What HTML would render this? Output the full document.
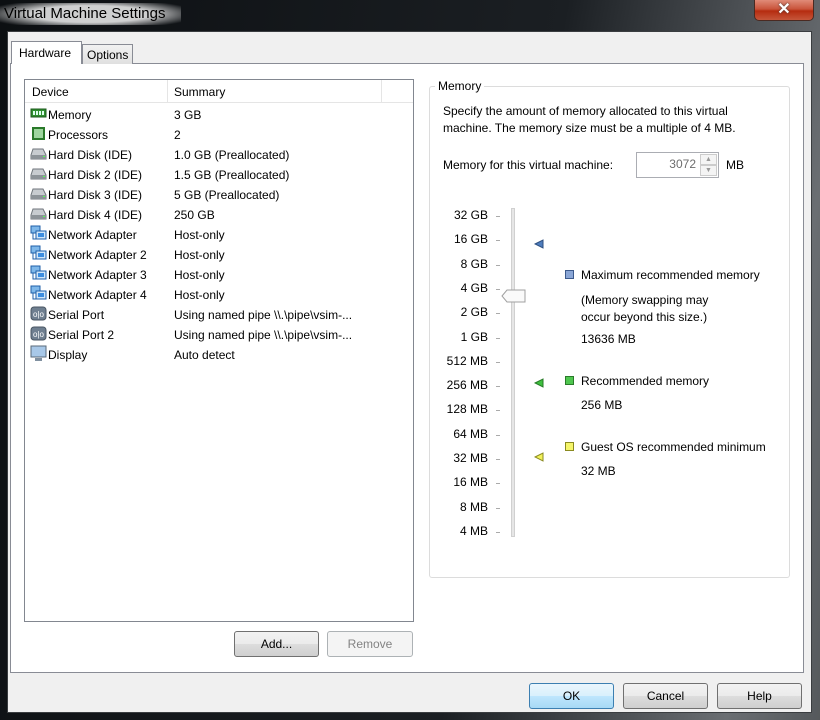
<!DOCTYPE html>
<html><head><style>
*{margin:0;padding:0;box-sizing:border-box}
body{width:820px;height:720px;overflow:hidden;background:#1a1d20;font-family:"Liberation Sans",sans-serif;font-size:12px;color:#000;position:relative}
.a{position:absolute}
.title{left:0;top:3px;font-size:15px;line-height:22px;color:#000;padding:0 16px 0 4px;background:radial-gradient(ellipse 60% 70% at 50% 50%,rgba(255,255,255,.8) 55%,rgba(255,255,255,0) 100%)}
.frame{left:0;top:0;width:820px;height:720px;background:linear-gradient(100deg,#0c0f12 0%,#1b1f23 60%,#6a6e72 90%,#55595c 100%)}
.client{left:7px;top:31px;width:805px;height:682px;background:#f0f0f0;border:1px solid #3a3d40}
.panel{left:10px;top:63px;width:794px;height:610px;background:#fff;border:1px solid #898c95}
.tab{border:1px solid #898c95;border-bottom:none;background:linear-gradient(#f2f2f2,#e0e0e0)}
.list{left:24px;top:79px;width:390px;height:543px;border:1px solid #828790;background:#fff}
.row{position:absolute;left:0;height:20px;line-height:20px;white-space:nowrap}
.btn{position:absolute;height:26px;border:1px solid #707070;border-radius:3px;background:linear-gradient(#f2f2f2 0%,#ebebeb 50%,#dddddd 51%,#cfcfcf 100%);text-align:center;line-height:24px}
.lbl{position:absolute;width:60px;text-align:right;left:428px}
.tick{position:absolute;left:496px;width:4px;height:1px;background:#aaa}
</style></head><body>
<div class="a frame"></div>
<div class="a title">Virtual Machine Settings</div>
<div class="a" style="left:754px;top:0;width:60px;height:21px;border:1px solid #4a2a22;border-top:none;border-radius:0 0 5px 5px;background:linear-gradient(#e08b78 0%,#c9543b 45%,#b52c10 55%,#c6563a 100%);color:#fff;text-align:center;font-weight:bold;font-size:16px;line-height:19px;text-shadow:0 0 2px #333">✕</div>
<div class="a client"></div>
<div class="a panel"></div>
<div class="a tab" style="left:11px;top:41px;width:71px;height:23px;background:#fff;line-height:22px;padding-left:7px">Hardware</div>
<div class="a tab" style="left:82px;top:44px;width:51px;height:20px;line-height:20px;padding-left:4px">Options</div>
<div class="a list">
 <div class="a" style="left:0;top:0;width:388px;height:23px;border-bottom:1px solid #e5e5e5;background:#fff"></div>
 <div class="a" style="left:142px;top:0;width:1px;height:23px;background:#e5e5e5"></div>
 <div class="a" style="left:356px;top:0;width:1px;height:23px;background:#e5e5e5"></div>
 <div class="a" style="left:7px;top:5px">Device</div>
 <div class="a" style="left:149px;top:5px">Summary</div>
 <div id="rows"></div>
</div>
<div class="btn" style="left:234px;top:631px;width:85px">Add...</div>
<div class="btn" style="left:327px;top:631px;width:86px;border-color:#adb2b5;background:#f4f4f4;color:#838383">Remove</div>

<div class="a" style="left:429px;top:86px;width:361px;height:492px;border:1px solid #dcdcdc;border-radius:3px"></div>
<div class="a" style="left:435px;top:79px;background:#fff;padding:0 3px">Memory</div>
<div class="a" style="left:443px;top:103px;line-height:17px">Specify the amount of memory allocated to this virtual<br>machine. The memory size must be a multiple of 4 MB.</div>
<div class="a" style="left:443px;top:158px">Memory for this virtual machine:</div>
<div class="a" style="left:636px;top:152px;width:83px;height:26px;border:1px solid #abadb3;background:#fff;color:#6d6d6d;text-align:right;padding-right:22px;line-height:22px">3072</div>
<div class="a" style="left:700px;top:154px;width:17px;height:11px;border:1px solid #ccc;background:#f4f4f4;font-size:7px;text-align:center;color:#999;line-height:10px">▲</div>
<div class="a" style="left:700px;top:165px;width:17px;height:11px;border:1px solid #ccc;background:#f4f4f4;font-size:7px;text-align:center;color:#999;line-height:10px">▼</div>
<div class="a" style="left:726px;top:158px">MB</div>

<div class="a" style="left:511px;top:208px;width:4px;height:329px;background:#e6e6e6;border:1px solid #d0d0d0"></div>
<div id="scale"></div>
<svg class="a" style="left:501px;top:289px" width="25" height="14"><path d="M1 7 L6 1 H24 V13 H6 Z" fill="#fafafa" stroke="#a0a0a0"/></svg>
<svg class="a" style="left:534px;top:239px" width="10" height="10"><path d="M1 5 L9 1 V9 Z" fill="#4f7dbd" stroke="#2d4f80"/></svg>
<svg class="a" style="left:534px;top:378px" width="10" height="10"><path d="M1 5 L9 1 V9 Z" fill="#3fbf3f" stroke="#267a26"/></svg>
<svg class="a" style="left:534px;top:452px" width="10" height="10"><path d="M1 5 L9 1 V9 Z" fill="#f2f25a" stroke="#8a8a20"/></svg>
<div class="a" style="left:565px;top:270px;width:9px;height:9px;background:#8aa6d6;border:1px solid #3c5a8c"></div>
<div class="a" style="left:581px;top:268px">Maximum recommended memory</div>
<div class="a" style="left:581px;top:292px;line-height:17px">(Memory swapping may<br>occur beyond this size.)</div>
<div class="a" style="left:581px;top:332px">13636 MB</div>
<div class="a" style="left:565px;top:376px;width:9px;height:9px;background:#4fc64f;border:1px solid #2a7a2a"></div>
<div class="a" style="left:581px;top:374px">Recommended memory</div>
<div class="a" style="left:581px;top:398px">256 MB</div>
<div class="a" style="left:565px;top:442px;width:9px;height:9px;background:#f5f56a;border:1px solid #8a8a20"></div>
<div class="a" style="left:581px;top:440px">Guest OS recommended minimum</div>
<div class="a" style="left:581px;top:464px">32 MB</div>

<div class="btn" style="left:529px;top:683px;width:85px;border-color:#3c7fb1;background:linear-gradient(#eaf6fd 0%,#d9f0fc 50%,#bee6fd 51%,#a7d9f5 100%)">OK</div>
<div class="btn" style="left:623px;top:683px;width:85px">Cancel</div>
<div class="btn" style="left:717px;top:683px;width:85px">Help</div>

<script>
var rows=[["mem","Memory","3 GB"],["cpu","Processors","2"],["hd","Hard Disk (IDE)","1.0 GB (Preallocated)"],["hd","Hard Disk 2 (IDE)","1.5 GB (Preallocated)"],["hd","Hard Disk 3 (IDE)","5 GB (Preallocated)"],["hd","Hard Disk 4 (IDE)","250 GB"],["net","Network Adapter","Host-only"],["net","Network Adapter 2","Host-only"],["net","Network Adapter 3","Host-only"],["net","Network Adapter 4","Host-only"],["ser","Serial Port","Using named pipe \\\\.\\pipe\\vsim-..."],["ser","Serial Port 2","Using named pipe \\\\.\\pipe\\vsim-..."],["dis","Display","Auto detect"]];
var ic={mem:'<rect x="1" y="4" width="15" height="8" fill="#2f8f2f" stroke="#1c5a1c"/><rect x="3" y="6" width="2" height="4" fill="#dfe"/><rect x="6" y="6" width="2" height="4" fill="#dfe"/><rect x="9" y="6" width="2" height="4" fill="#dfe"/><rect x="12" y="6" width="2" height="4" fill="#dfe"/>',
cpu:'<rect x="3" y="3" width="11" height="11" fill="#9ed69e" stroke="#2a7a2a" stroke-width="2"/>',
hd:'<path d="M3 4 H13 L16 10 V14 H1 V10 Z" fill="#c8ccd0" stroke="#70767c"/><rect x="1" y="10" width="15" height="4" fill="#8d9398"/><rect x="13" y="11" width="2" height="1" fill="#5f5"/>',
net:'<rect x="1" y="1" width="9" height="7" fill="#7fb8ea" stroke="#1f5fa8"/><rect x="6" y="6" width="10" height="8" fill="#cfe6fa" stroke="#1f5fa8"/><rect x="8" y="8" width="6" height="4" fill="#3c8de0"/><path d="M3 8 V14 H6" stroke="#1f5fa8" fill="none"/>',
ser:'<rect x="1" y="2" width="15" height="13" rx="3" fill="#6f7f90" stroke="#4a5663"/><text x="8.5" y="12" font-size="8" text-anchor="middle" fill="#fff" font-family="Liberation Sans">o|o</text>',
dis:'<rect x="1" y="1" width="15" height="11" fill="#a8c8e8" stroke="#5a6a7a"/><rect x="5" y="13" width="7" height="3" fill="#8090a0"/>'};
var h='';rows.forEach(function(r,i){var t=25+i*20;h+='<div class="row" style="top:'+t+'px;left:5px"><svg width="17" height="17" style="vertical-align:-3px">'+ic[r[0]]+'</svg></div><div class="row" style="top:'+t+'px;left:23px">'+r[1]+'</div><div class="row" style="top:'+t+'px;left:149px">'+r[2]+'</div>';});
document.getElementById('rows').innerHTML=h;
var s=["32 GB","16 GB","8 GB","4 GB","2 GB","1 GB","512 MB","256 MB","128 MB","64 MB","32 MB","16 MB","8 MB","4 MB"];var g='';
s.forEach(function(x,i){var y=215+i*24.3;g+='<div class="lbl" style="top:'+(y-7)+'px">'+x+'</div><div class="tick" style="top:'+Math.round(y+1)+'px"></div>';});
document.getElementById('scale').innerHTML=g;
</script>
</body></html>
